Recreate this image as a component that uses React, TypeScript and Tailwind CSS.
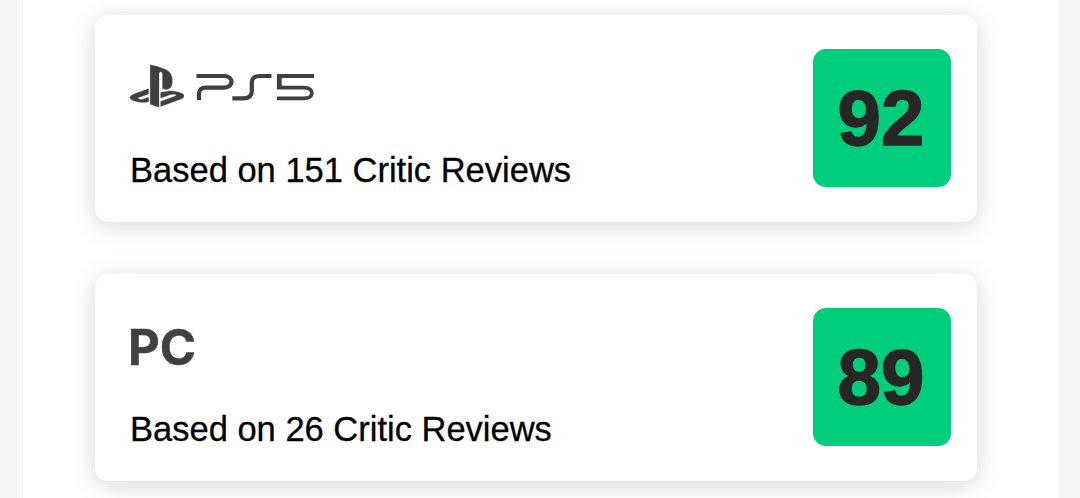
import { FC, ReactNode } from 'react'
import { SiPlaystation } from 'react-icons/si'

const Ps5Logo: FC = () => (
  <div className="flex items-center text-[#404040]">
    <SiPlaystation className="-mt-[3px] h-[54px] w-[54px]" stroke="currentColor" strokeWidth="0.12" />
    <svg
      role="img"
      aria-label="PS5"
      viewBox="0 0 120 30"
      className="ml-[11px] h-[30px] w-[120px]"
      fill="none"
      stroke="currentColor"
      strokeWidth="3.8"
    >
      <path d="M1.5 4H29C39 4 39 15.6 29 15.6H11Q4 15.6 4 21.5V28" strokeWidth="4.2" />
      <path d="M37.3 26.4H48Q56.8 26.4 56.8 19V11Q56.8 4 65 4H76.5" strokeWidth="4.2" />
      <path d="M82 4H119M82 15.6H109C119.5 15.6 119.5 26.4 109 26.4H82" />
      <path d="M84.3 4V17" strokeWidth="4.8" />
    </svg>
  </div>
)

const PLATFORMS: { id: string; logo: ReactNode; reviews: number; score: number }[] = [
  { id: 'ps5', logo: <Ps5Logo />, reviews: 151, score: 92 },
  {
    id: 'pc',
    logo: (
      <span className="mt-[2px] -ml-[2px] font-['Inter',sans-serif] text-[49px] leading-none font-bold text-[#404040] [-webkit-text-stroke:0.5px_#404040]">
        PC
      </span>
    ),
    reviews: 26,
    score: 89,
  },
]

export default function App() {
  return (
    <div className="h-[498px] overflow-hidden bg-[#f6f6f6] pr-[22px] pl-[23px] font-['Liberation_Sans',sans-serif]">
      <main className="flex h-full flex-col gap-[52px] bg-white pt-[14.5px] pl-[72px]">
        {PLATFORMS.map((platform) => (
          <section
            key={platform.id}
            className="flex h-[207px] w-[882px] shrink-0 justify-between rounded-[13px] bg-white pt-[34.5px] pr-[26px] pl-[35px] shadow-[0_4px_26px_rgba(0,0,0,0.16)]"
          >
            <div>
              <div className="flex h-[76px] items-center">{platform.logo}</div>
              <p className="mt-[25px] text-[34.5px] leading-[40px] whitespace-nowrap text-black [-webkit-text-stroke:0.3px_black]">
                Based on {platform.reviews} Critic Reviews
              </p>
            </div>
            <div className="flex size-[138px] items-center justify-center rounded-[13px] bg-[#00ce7a] pr-[2px] text-[78px] leading-none font-bold text-[#262626] [-webkit-text-stroke:1.5px_#262626]">
              {platform.score}
            </div>
          </section>
        ))}
      </main>
    </div>
  )
}
